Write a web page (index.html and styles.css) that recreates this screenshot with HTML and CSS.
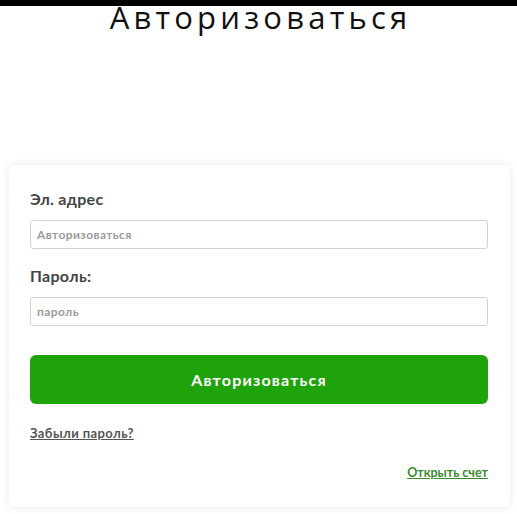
FILE: index.html
```html
<!DOCTYPE html>
<html lang="ru">
<head>
  <meta charset="UTF-8" />
  <meta name="viewport" content="width=device-width, initial-scale=1.0"/>
  <title>Авторизоваться</title>
  <link rel="stylesheet" href="styles.css">
</head>
<body>
  <div class="topbar"></div>
  <h1 class="title">Авторизоваться</h1>

  <div class="card">
    <label class="label" for="email">Эл. адрес</label>
    <input class="field" type="text" id="email" placeholder="Авторизоваться">

    <label class="label label-pass" for="pass">Пароль:</label>
    <input class="field" type="password" id="pass" placeholder="пароль">

    <button class="btn-login">Авторизоваться</button>

    <a class="link-forgot" href="#">Забыли пароль?</a>
    <div class="card-foot">
      <a class="link-open" href="#">Открыть счет</a>
    </div>
  </div>
</body>
</html>
```

FILE: styles.css
```css
* {margin: 0; padding: 0; box-sizing: border-box; font-family: 'Lato', 'Noto Sans', sans-serif;}
body {background-color: #fff; width: 517px; height: 514px; overflow: hidden;}
.topbar {position: relative; z-index: 1; height: 6px; background-color: #000;}
.title {margin-top: -5px; padding-left: 4px; text-align: center; font-family: 'Open Sans', sans-serif; font-weight: 400; font-size: 31px; line-height: 32px; color: #111; letter-spacing: 4.2px;}

/* Card */
.card {display: flex; flex-direction: column; margin: 132px 7px 0 9px; padding: 25px 22px 26px 21px; background-color: #fff; border-radius: 6px; box-shadow: 0 0 8px rgba(0,0,0,0.09);}
.label {font-size: 16px; font-weight: 700; line-height: 18px; color: #444; letter-spacing: 0.3px;}
.label-pass {margin-top: 18px;}
.field {height: 29px; margin-top: 12px; padding: 0 6px; border: 1px solid #d2d2d2; border-radius: 3px; font-size: 12px; font-weight: 700; color: #555; letter-spacing: 0.4px; outline: none;}
.field::placeholder {color: #9a9a9a;}
.btn-login {height: 49px; margin-top: 29px; border: none; border-radius: 6px; background-color: #1fa30a; color: #fff; font-size: 16px; font-weight: 700; letter-spacing: 1.2px; cursor: pointer;}
.link-forgot {align-self: flex-start; margin-top: 21px; font-size: 13px; font-weight: 700; line-height: 16px; color: #555; letter-spacing: 0.4px; text-decoration: underline;}
.card-foot {display: flex; justify-content: flex-end; margin-top: 24px;}
.link-open {font-size: 12.5px; font-weight: 700; line-height: 16px; color: #3a8a2e; text-decoration: underline;}
```
